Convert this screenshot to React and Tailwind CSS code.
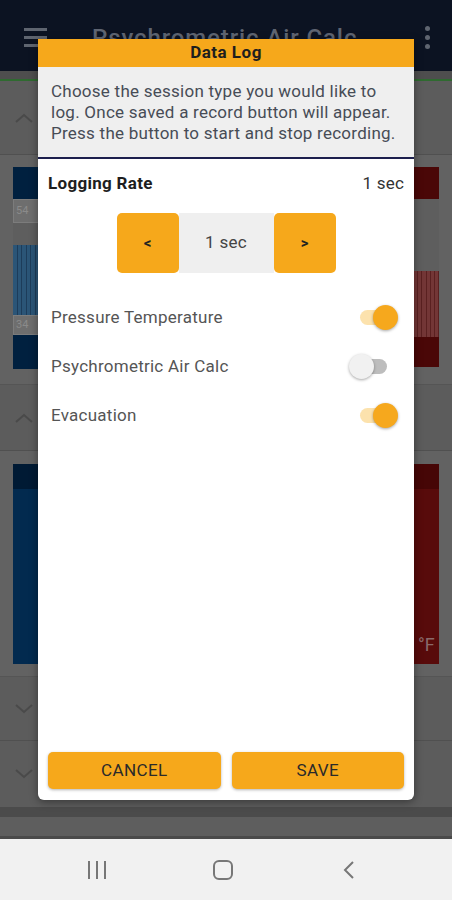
import React from "react";

function ChevronUp() {
  return (
    <svg width="18" height="10" viewBox="0 0 18 10" fill="none">
      <path d="M1 9 L9 2 L17 9" stroke="#4a4a4a" strokeWidth="2" />
    </svg>
  );
}
function ChevronDown() {
  return (
    <svg width="18" height="10" viewBox="0 0 18 10" fill="none">
      <path d="M1 1 L9 8 L17 1" stroke="#4a4a4a" strokeWidth="2" />
    </svg>
  );
}

function Toggle({ on }) {
  if (on) {
    return (
      <div className="relative w-[40px] h-[26px] flex items-center">
        <div className="absolute left-[2px] w-[34px] h-[15px] rounded-full bg-[#fce2ad]" />
        <div className="absolute right-0 w-[25px] h-[25px] rounded-full bg-[#f6a81d] shadow-[0_1px_3px_rgba(0,0,0,0.35)]" />
      </div>
    );
  }
  return (
    <div className="relative w-[40px] h-[26px] flex items-center">
      <div className="absolute left-[8px] w-[30px] h-[15px] rounded-full bg-[#bdbdbd]" />
      <div className="absolute left-0 w-[25px] h-[25px] rounded-full bg-[#f1f1f1] shadow-[0_1px_3px_rgba(0,0,0,0.35)]" />
    </div>
  );
}

function Stripes({ color, bg }) {
  return (
    <div className="flex h-full w-full" style={{ backgroundColor: bg }}>
      {Array.from({ length: 6 }).map((_, i) => (
        <div key={i} className="flex-1 border-r" style={{ borderColor: color }} />
      ))}
    </div>
  );
}

export default function App() {
  return (
    <div
      className="relative w-[452px] h-[900px] overflow-hidden bg-[#5e5e5e]"
      style={{ fontFamily: "Roboto, 'Noto Sans', sans-serif" }}
    >
      {/* Background app (dimmed) */}
      <div className="flex flex-col h-full">
        <div className="h-[71px] bg-[#0c1322] flex items-center px-[24px] pt-[4px]">
          <div className="flex flex-col gap-[5px] w-[23px]">
            <div className="h-[3px] bg-[#5f6570]" />
            <div className="h-[3px] bg-[#5f6570]" />
            <div className="h-[3px] bg-[#5f6570]" />
          </div>
          <div className="ml-[45px] text-[24px] tracking-[0.9px] text-[#5f6572] font-medium whitespace-nowrap">Psychrometric Air Calc</div>
          <div className="ml-auto mr-[-2px] flex flex-col gap-[4px]">
            <div className="w-[5px] h-[5px] rounded-full bg-[#5f6570]" />
            <div className="w-[5px] h-[5px] rounded-full bg-[#5f6570]" />
            <div className="w-[5px] h-[5px] rounded-full bg-[#5f6570]" />
          </div>
        </div>
        <div className="h-[8px] bg-[#4e4e4e]" />
        <div className="h-[2px] bg-[#2f6a30]" />
        <div className="h-[74px] bg-[#5c5c5c] border-b border-[#505050] flex items-center px-[15px]">
          <ChevronUp />
        </div>
        <div className="h-[230px] bg-[#626262] flex justify-between px-[13px] pt-[12px] border-b border-[#555]">
          <div className="w-[27px] h-[202px] flex flex-col">
            <div className="h-[32px] bg-[#00203f]" />
            <div className="h-[24px] bg-[#6e6e6e] border border-[#7c7c7c] text-[11px] text-[#8a8a8a] pl-[2px] leading-[22px]">54</div>
            <div className="h-[22px] bg-[#5e5e5e]" />
            <div className="h-[70px]"><Stripes color="#1d3c5a" bg="#2b5577" /></div>
            <div className="h-[20px] bg-[#6e6e6e] border border-[#7c7c7c] text-[11px] text-[#8a8a8a] pl-[2px] leading-[18px]">34</div>
            <div className="flex-1 bg-[#00203f]" />
          </div>
          <div className="w-[25px] h-[200px] flex flex-col">
            <div className="h-[32px] bg-[#4a0707]" />
            <div className="h-[72px] bg-[#5e5e5e]" />
            <div className="h-[66px]"><Stripes color="#5a2020" bg="#733636" /></div>
            <div className="flex-1 bg-[#4a0707]" />
          </div>
        </div>
        <div className="h-[66px] bg-[#5c5c5c] border-b border-[#505050] flex items-center px-[15px]">
          <ChevronUp />
        </div>
        <div className="h-[226px] bg-[#626262] flex justify-between px-[13px] pt-[13px] border-b border-[#555]">
          <div className="w-[25px] h-[200px] flex flex-col">
            <div className="h-[25px] bg-[#001a34]" />
            <div className="flex-1 bg-[#022a4f]" />
          </div>
          <div className="w-[25px] h-[200px] flex flex-col relative">
            <div className="h-[25px] bg-[#460606]" />
            <div className="flex-1 bg-[#580b0b]" />
            <div className="absolute left-[4px] bottom-[6px] text-[18px] text-[#8a6a6a]">°F</div>
          </div>
        </div>
        <div className="h-[64px] bg-[#5c5c5c] border-b border-[#505050] flex items-center px-[15px]">
          <ChevronDown />
        </div>
        <div className="h-[66px] bg-[#5c5c5c] flex items-center px-[15px]">
          <ChevronDown />
        </div>
        <div className="h-[10px] bg-[#4b4b4b]" />
        <div className="h-[22px] bg-[#5e5e5e] border-b-[3px] border-[#4a4a4a]" />
        <div className="flex-1 bg-[#f1f1f1] flex items-center px-[34px]">
          <div className="w-[126px] flex justify-center">
            <div className="flex gap-[6px] h-[18px]">
              <div className="w-[2px] bg-[#777]" />
              <div className="w-[2px] bg-[#777]" />
              <div className="w-[2px] bg-[#777]" />
            </div>
          </div>
          <div className="w-[126px] flex justify-center">
            <div className="w-[20px] h-[20px] rounded-[6px] border-[2px] border-[#777]" />
          </div>
          <div className="w-[126px] flex justify-center">
            <svg width="12" height="20" viewBox="0 0 12 20" fill="none">
              <path d="M10 2 L2 10 L10 18" stroke="#777" strokeWidth="2" />
            </svg>
          </div>
        </div>
      </div>

      {/* Dialog */}
      <div className="absolute left-[38px] top-[39px] w-[376px] h-[761px] bg-white rounded-b-[6px] shadow-[0_2px_8px_rgba(0,0,0,0.4)] flex flex-col overflow-hidden">
        <div className="h-[28px] bg-[#f6a81b] flex items-center justify-center text-[17px] tracking-[0.5px] font-bold text-[#1e1e1e]">
          Data Log
        </div>
        <div className="bg-[#efefef] px-[13px] pt-[14px] h-[92px] border-b-[2px] border-[#1c1f4d] text-[17px] tracking-[0.25px] leading-[21px] text-[#474c56] whitespace-nowrap">
          Choose the session type you would like to
          <br />
          log. Once saved a record button will appear.
          <br />
          Press the button to start and stop recording.
        </div>
        <div className="flex items-center justify-between px-[10px] pt-[13px] leading-[22px]">
          <div className="text-[17px] tracking-[0.3px] font-bold text-[#1e1e1e]">Logging Rate</div>
          <div className="text-[17px] tracking-[0.2px] text-[#333]">1 sec</div>
        </div>
        <div className="flex justify-center mt-[19px]">
          <div className="flex h-[60px]">
            <div className="w-[62px] bg-[#f6a81b] rounded-[5px] flex items-center justify-center text-[15px] font-bold text-[#222]">&lt;</div>
            <div className="w-[95px] bg-[#efefef] flex items-center justify-center text-[17px] tracking-[0.3px] text-[#444]">1 sec</div>
            <div className="w-[62px] bg-[#f6a81b] rounded-[5px] flex items-center justify-center text-[15px] font-bold text-[#222]">&gt;</div>
          </div>
        </div>
        <div className="flex flex-col mt-[20px] pl-[13px] pr-[16px]">
          <div className="h-[49px] flex items-center justify-between">
            <span className="text-[17px] tracking-[0.25px] text-[#555]">Pressure Temperature</span>
            <Toggle on />
          </div>
          <div className="h-[49px] flex items-center justify-between">
            <span className="text-[17px] tracking-[0.25px] text-[#555]">Psychrometric Air Calc</span>
            <div className="mr-[9px]"><Toggle on={false} /></div>
          </div>
          <div className="h-[49px] flex items-center justify-between">
            <span className="text-[17px] tracking-[0.25px] text-[#555]">Evacuation</span>
            <Toggle on />
          </div>
        </div>
        <div className="flex-1" />
        <div className="flex gap-[11px] px-[10px] pb-[11px]">
          <button className="flex-1 h-[37px] bg-[#f6a81b] rounded-[5px] shadow-[0_1px_3px_rgba(0,0,0,0.3)] text-[17px] tracking-[0.4px] text-[#2a2a2a]">CANCEL</button>
          <button className="flex-1 h-[37px] bg-[#f6a81b] rounded-[5px] shadow-[0_1px_3px_rgba(0,0,0,0.3)] text-[17px] tracking-[0.4px] text-[#2a2a2a]">SAVE</button>
        </div>
      </div>
    </div>
  );
}
